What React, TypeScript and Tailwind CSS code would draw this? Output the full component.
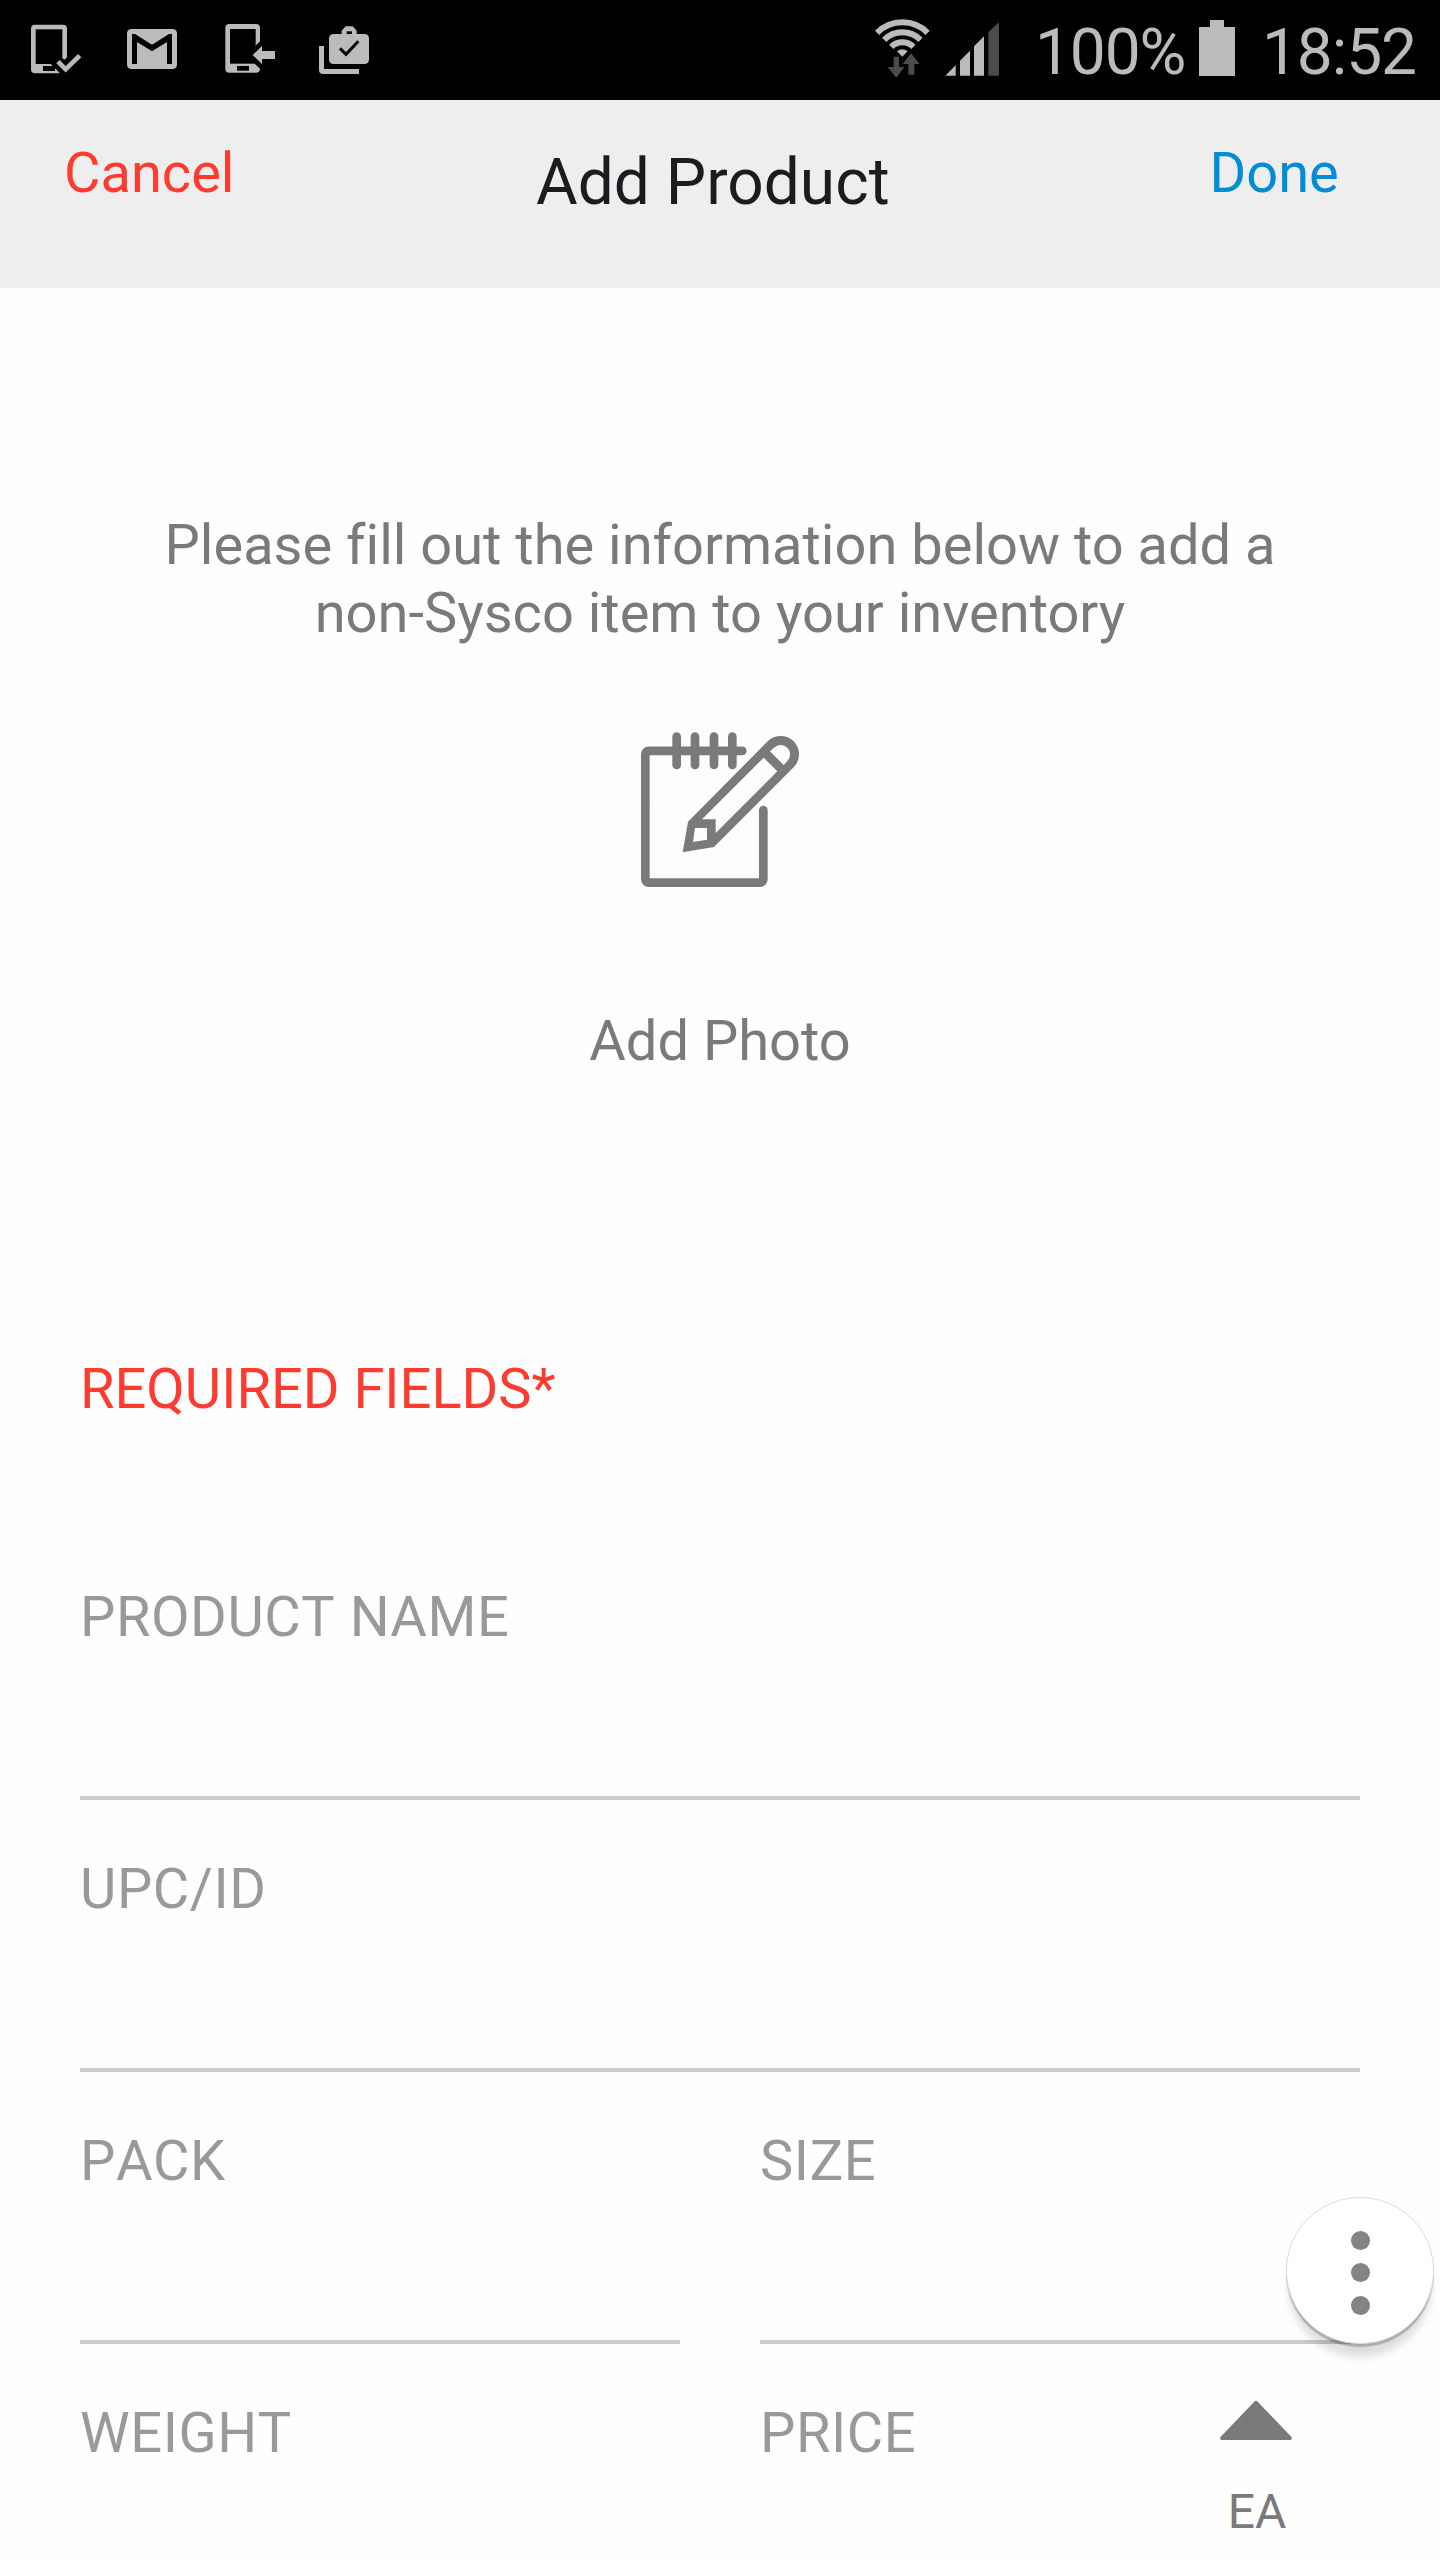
import type { ReactNode } from "react";

function PhoneCheckIcon() {
  return (
    <svg className="size-[52px]" viewBox="90 72 156 156" fill="#bbb">
      <rect x="93" y="74" width="108" height="146" rx="12" />
      <rect x="107" y="88" width="80" height="104" fill="#000" />
      <rect x="129" y="198" width="36" height="15" fill="#000" />
      <path d="M186 174L194 179L202 170H212V223H183L152 192H186Z" fill="#000" />
      <path d="M174 185L197 208L239 167" fill="none" stroke="#bbb" strokeWidth="14" />
    </svg>
  );
}

function MailIcon() {
  return (
    <svg className="size-[52px]" viewBox="378 72 156 156" fill="#bbb">
      <rect x="381" y="87" width="150" height="120" rx="13" />
      <path
        d="M396 192V102H405L456 134L507 102H516V192H501V126L456 154L411 126V192Z"
        fill="#000"
      />
    </svg>
  );
}

function PhoneArrowIcon() {
  return (
    <svg className="size-[52px]" viewBox="672 72 156 156" fill="#bbb">
      <rect x="676" y="72" width="104" height="146" rx="12" />
      <rect x="690" y="87" width="77" height="104" fill="#000" />
      <rect x="711" y="198" width="36" height="14" fill="#000" />
      <path d="M766 137L782 122V208L764 191Z" fill="#000" />
      <path d="M758 165L786 138V153H825V177H786V192Z" />
    </svg>
  );
}

function WorkDoneIcon() {
  return (
    <svg className="size-[52px]" viewBox="954 72 156 156" fill="#bbb">
      <path d="M957 138H972V207H1077V222H969Q957 222 957 210Z" />
      <rect x="987" y="102" width="120" height="90" rx="13" />
      <path d="M1025 104V92L1037 79H1058L1070 92V104Z" />
      <rect x="1040" y="94" width="16" height="8" fill="#000" />
      <path d="M1020 145L1038 163L1075 124" fill="none" stroke="#000" strokeWidth="9" />
    </svg>
  );
}

function NetworkIcon() {
  return (
    <svg className="mt-2.5 h-[76px] w-[140px]" viewBox="0 0 420 228" fill="#bbb">
      <g fill="none" stroke="#bbb" strokeWidth="18">
        <path d="M36.3 68.3A107 107 0 0 1 187.7 68.3" />
        <path d="M57.6 89.6A77 77 0 0 1 166.4 89.6" />
        <path d="M78.8 110.8A47 47 0 0 1 145.2 110.8" />
      </g>
      <path d="M96 124Q112 111 128 124L112 140Z" />
      <g fill="#4b4b4b">
        <path d="M86 140H102V171H118L94 203L68 171H86Z" />
        <path d="M138 130L164 162H148V194H130V162H113Z" />
        <path d="M370 197V66L402 37V197Z" />
      </g>
      <path d="M241 197L272 166V197Z" />
      <path d="M285 197V152L315 122V197Z" />
      <path d="M327 197V109L357 79V197Z" />
    </svg>
  );
}

function BatteryIcon() {
  return (
    <svg className="mt-5 h-14 w-9" viewBox="0 0 36 56" fill="#bbb">
      <path d="M11 0H25V7H36V56H0V7H11Z" />
    </svg>
  );
}

function NotepadIcon() {
  return (
    <svg className="h-[156px] w-[160px]" viewBox="240 96 480 468">
      <g fill="none" stroke="#7a7a7a" strokeWidth="26" strokeLinecap="round">
        <path d="M547 152.500H266a10 10 0 0 0-10 10V538a10 10 0 0 0 10 10H600a10 10 0 0 0 10-10V330" />
        <path d="M350 110V195M405 110V195M462 110V195M517 110V195" />
      </g>
      <path
        fill="#7a7a7a"
        fillRule="evenodd"
        d="M368 457L384 365L623 124A55 55 0 0 1 701 202L462 441ZM426 358L611 173L652 214L467 399V358ZM630 154L642 143A28 28 0 0 1 682 183L671 195ZM405 384H441V419L399 426Z"
      />
    </svg>
  );
}

function StatusBar() {
  return (
    <header className="flex h-[100px] items-start bg-black text-[64px] leading-[106px] tracking-[-1.1px] text-[#bbb]">
      <div className="flex pt-6 pl-[30px]">
        <PhoneCheckIcon />
        <div className="pl-11"><MailIcon /></div>
        <div className="pl-[46px]"><PhoneArrowIcon /></div>
        <div className="pl-[42px]"><WorkDoneIcon /></div>
      </div>
      <div className="flex items-start pl-[495px]">
        <NetworkIcon />
        <span className="box-content w-[164px] pl-[30px] whitespace-nowrap">100%</span>
        <BatteryIcon />
        <span className="pl-[27px]">18:52</span>
      </div>
    </header>
  );
}

function Field({ label, children }: { label: string; children?: ReactNode }) {
  return (
    <div className="flex h-[272px] items-start justify-between border-b-4 border-[#cacaca]">
      <label className="pt-[55px] tracking-[0.58px] text-[#999] [font-kerning:none]">{label}</label>
      {children}
    </div>
  );
}

function UnitPicker() {
  return (
    <div className="mr-[67px] flex w-[74px] flex-col items-center pt-14 text-[#7a7a7a]">
      <svg className="h-10 w-[72px]" viewBox="0 0 72 40" fill="#7a7a7a">
        <path d="M34.500 1.500Q36 0 37.500 1.500L71.500 37Q72.500 40 70 40H2Q-.5 40 .5 37Z" />
      </svg>
      <span className="mt-11 pl-0.5 text-5xl leading-[56px] [font-kerning:none]">EA</span>
    </div>
  );
}

export default function App() {
  return (
    <div className="relative h-[2560px] w-[1440px] overflow-hidden bg-[#fefefe] font-['Roboto',sans-serif] text-[56px] leading-[68px] [font-variant-ligatures:none]">
      <StatusBar />
      <nav className="grid h-[188px] grid-cols-[472px_673.500px_1fr] items-start bg-[#eee] pl-16 leading-[80px]">
        <button className="pt-[33px] text-left text-[#ff3b30]">Cancel</button>
        <h1 className="pt-[43px] text-[64px] text-[#1c1c20]">Add Product</h1>
        <button className="pt-[33px] text-left text-[#008cd6]">Done</button>
      </nav>
      <main className="px-20">
        <section className="flex flex-col items-center pt-[223px] text-[#7a7a7a]">
          <p className="text-center whitespace-nowrap">
            Please fill out the information below to add a
            <br />
            non-Sysco item to your inventory
          </p>
          <div className="pt-[85px]"><NotepadIcon /></div>
          <span className="pt-[119px]">Add Photo</span>
        </section>
        <h2 className="pt-[280px] pb-[105px] text-[#ff3b30]">REQUIRED FIELDS*</h2>
        <Field label="PRODUCT NAME" />
        <Field label="UPC/ID" />
        <div className="grid grid-cols-2 gap-x-20">
          <Field label="PACK" />
          <Field label="SIZE" />
          <Field label="WEIGHT" />
          <Field label="PRICE">
            <UnitPicker />
          </Field>
        </div>
      </main>
      <button className="absolute top-[2197px] left-[1286px] flex h-[147px] w-[148px] flex-col items-center justify-center gap-[13.500px] rounded-full border border-[#dcdcdc] bg-white pt-1 shadow-[0_3px_1px_rgba(0,0,0,0.22),0_16px_8px_-3px_rgba(0,0,0,0.13)]">
        <span className="size-[19px] rounded-full bg-[#848484]" />
        <span className="size-[19px] rounded-full bg-[#848484]" />
        <span className="size-[19px] rounded-full bg-[#848484]" />
      </button>
    </div>
  );
}
